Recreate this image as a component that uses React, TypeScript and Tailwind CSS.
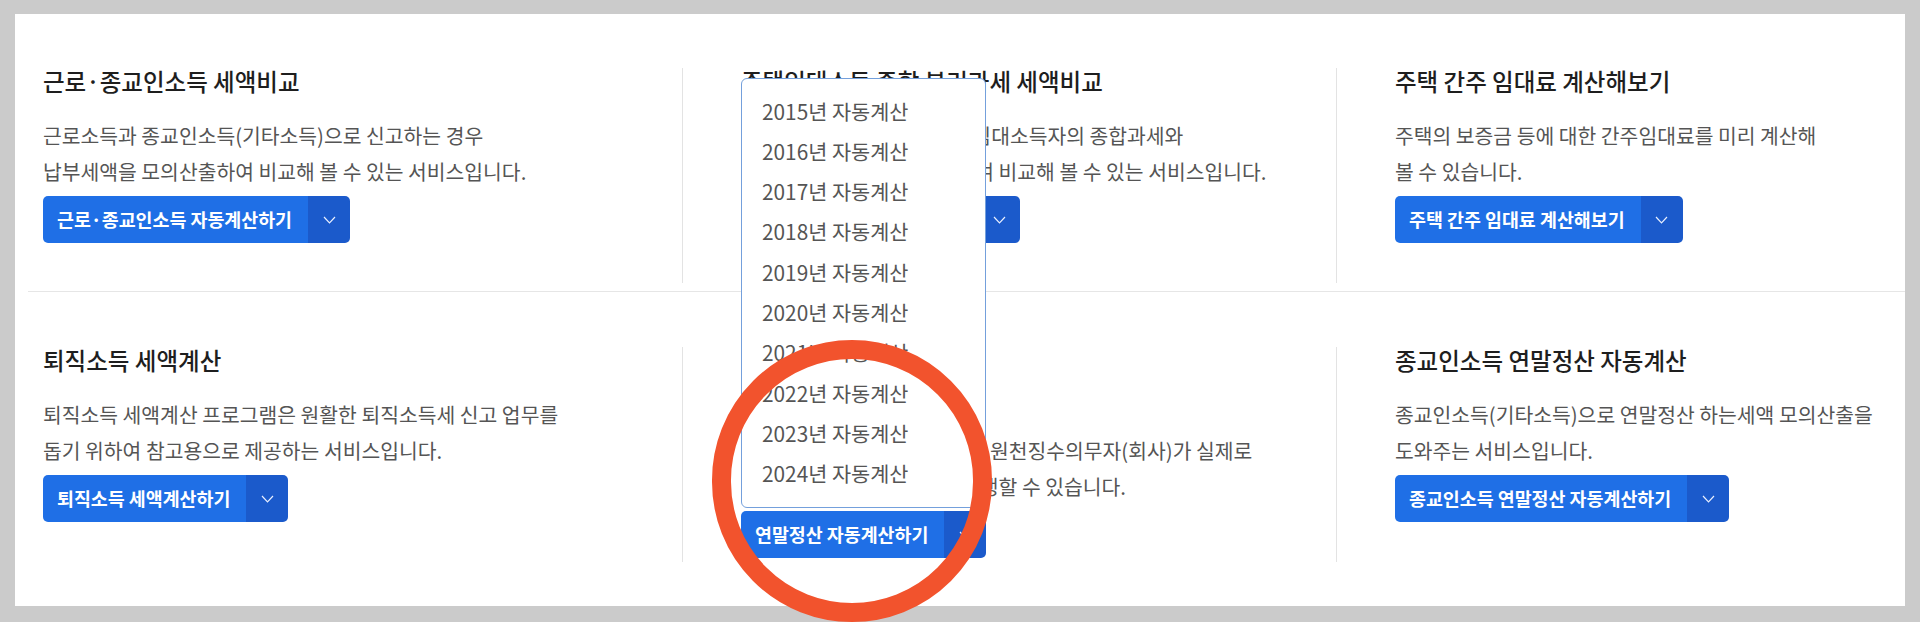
import React from 'react';

type Item = {
  title: string;
  lines: string[];
  button: string;
  menu?: boolean;
};

const years = ['2015', '2016', '2017', '2018', '2019', '2020', '2021', '2022', '2023', '2024'];

const rows: Item[][] = [
  [
    {
      title: '근로·종교인소득 세액비교',
      lines: ['근로소득과 종교인소득(기타소득)으로 신고하는 경우', '납부세액을 모의산출하여 비교해 볼 수 있는 서비스입니다.'],
      button: '근로·종교인소득 자동계산하기',
    },
    {
      title: '주택임대소득 종합 분리과세 세액비교',
      lines: ['수입금액 2천만원 이하 주택임대소득자의 종합과세와', '분리과세 세액을 모의계산하여 비교해 볼 수 있는 서비스입니다.'],
      button: '주택임대소득 세액비교하기',
    },
    {
      title: '주택 간주 임대료 계산해보기',
      lines: ['주택의 보증금 등에 대한 간주임대료를 미리 계산해', '볼 수 있습니다.'],
      button: '주택 간주 임대료 계산해보기',
    },
  ],
  [
    {
      title: '퇴직소득 세액계산',
      lines: ['퇴직소득 세액계산 프로그램은 원활한 퇴직소득세 신고 업무를', '돕기 위하여 참고용으로 제공하는 서비스입니다.'],
      button: '퇴직소득 세액계산하기',
    },
    {
      title: '연말정산 자동계산',
      lines: ['근로자의 연말정산 세액을', '근로자 본인이 미리 계산하고, 원천징수의무자(회사)가 실제로', '연말정산 업무를 간편하게 진행할 수 있습니다.'],
      button: '연말정산 자동계산하기',
      menu: true,
    },
    {
      title: '종교인소득 연말정산 자동계산',
      lines: ['종교인소득(기타소득)으로 연말정산 하는세액 모의산출을', '도와주는 서비스입니다.'],
      button: '종교인소득 연말정산 자동계산하기',
    },
  ],
];

const Chevron = () => (
  <svg width="13" height="8" viewBox="0 0 13 8" fill="none">
    <polyline points="1,1 6.5,6.8 12,1" stroke="#e8efff" strokeWidth="1.2" />
  </svg>
);

const SplitButton = ({ label, menu }: { label: string; menu?: boolean }) => (
  <div className="relative self-start mt-[7px]">
    {menu && (
      <div className="absolute left-0 bottom-[calc(100%+3px)] w-full z-10 bg-white border border-[#74a0dc] rounded-[6px] pt-[12px] pb-[13px]">
        {years.map((y) => (
          <div key={y} className="h-[40.3px] flex items-center pl-[20px] text-[20.8px] text-[#555555] whitespace-nowrap">
            {y}년 자동계산
          </div>
        ))}
      </div>
    )}
    <div className="flex h-[47px] rounded-[5px] overflow-hidden">
      <div className="flex items-center bg-[#1f6fe6] pl-[14px] pr-[16px] text-white text-[18.4px] font-bold whitespace-nowrap">
        {label}
      </div>
      <div className="flex items-center justify-center w-[42px] bg-[#1b5acb]">
        <Chevron />
      </div>
    </div>
  </div>
);

const Column = ({ item, first }: { item: Item; first: boolean }) => (
  <div className={first ? 'h-[215px] flex flex-col pl-[15px]' : 'h-[215px] flex flex-col pl-[58px] border-l border-[#e3e3e3]'}>
    <h3 className="text-[23.5px] leading-[26px] font-medium text-[#1e1e1e] whitespace-nowrap">{item.title}</h3>
    <p className="mt-[23px] text-[20.4px] leading-[36px] text-[#555555] whitespace-nowrap">
      {item.lines.map((l, i) => (
        <React.Fragment key={i}>
          {i > 0 && <br />}
          {l}
        </React.Fragment>
      ))}
    </p>
    <SplitButton label={item.button} menu={item.menu} />
  </div>
);

export default function App() {
  return (
    <div className="relative w-[1920px] h-[622px] overflow-hidden bg-[#cbcbcb] pt-[14px] px-[15px] font-['Noto_Sans_CJK_KR','Noto_Sans',sans-serif]">
      <div className="h-[592px] bg-white pl-[13px]">
        <div className="grid grid-cols-[654px_654px_1fr] pt-[54px] pb-[8px] border-b border-[#e6e6e6]">
          {rows[0].map((item, i) => (
            <Column key={i} item={item} first={i === 0} />
          ))}
        </div>
        <div className="grid grid-cols-[654px_654px_1fr] pt-[55px]">
          {rows[1].map((item, i) => (
            <Column key={i} item={item} first={i === 0} />
          ))}
        </div>
      </div>

      {/* annotation circle */}
      <div className="absolute left-[712px] top-[340px] w-[280px] h-[282px] rounded-full border-[19px] border-[#f2532d] z-20" />
    </div>
  );
}
